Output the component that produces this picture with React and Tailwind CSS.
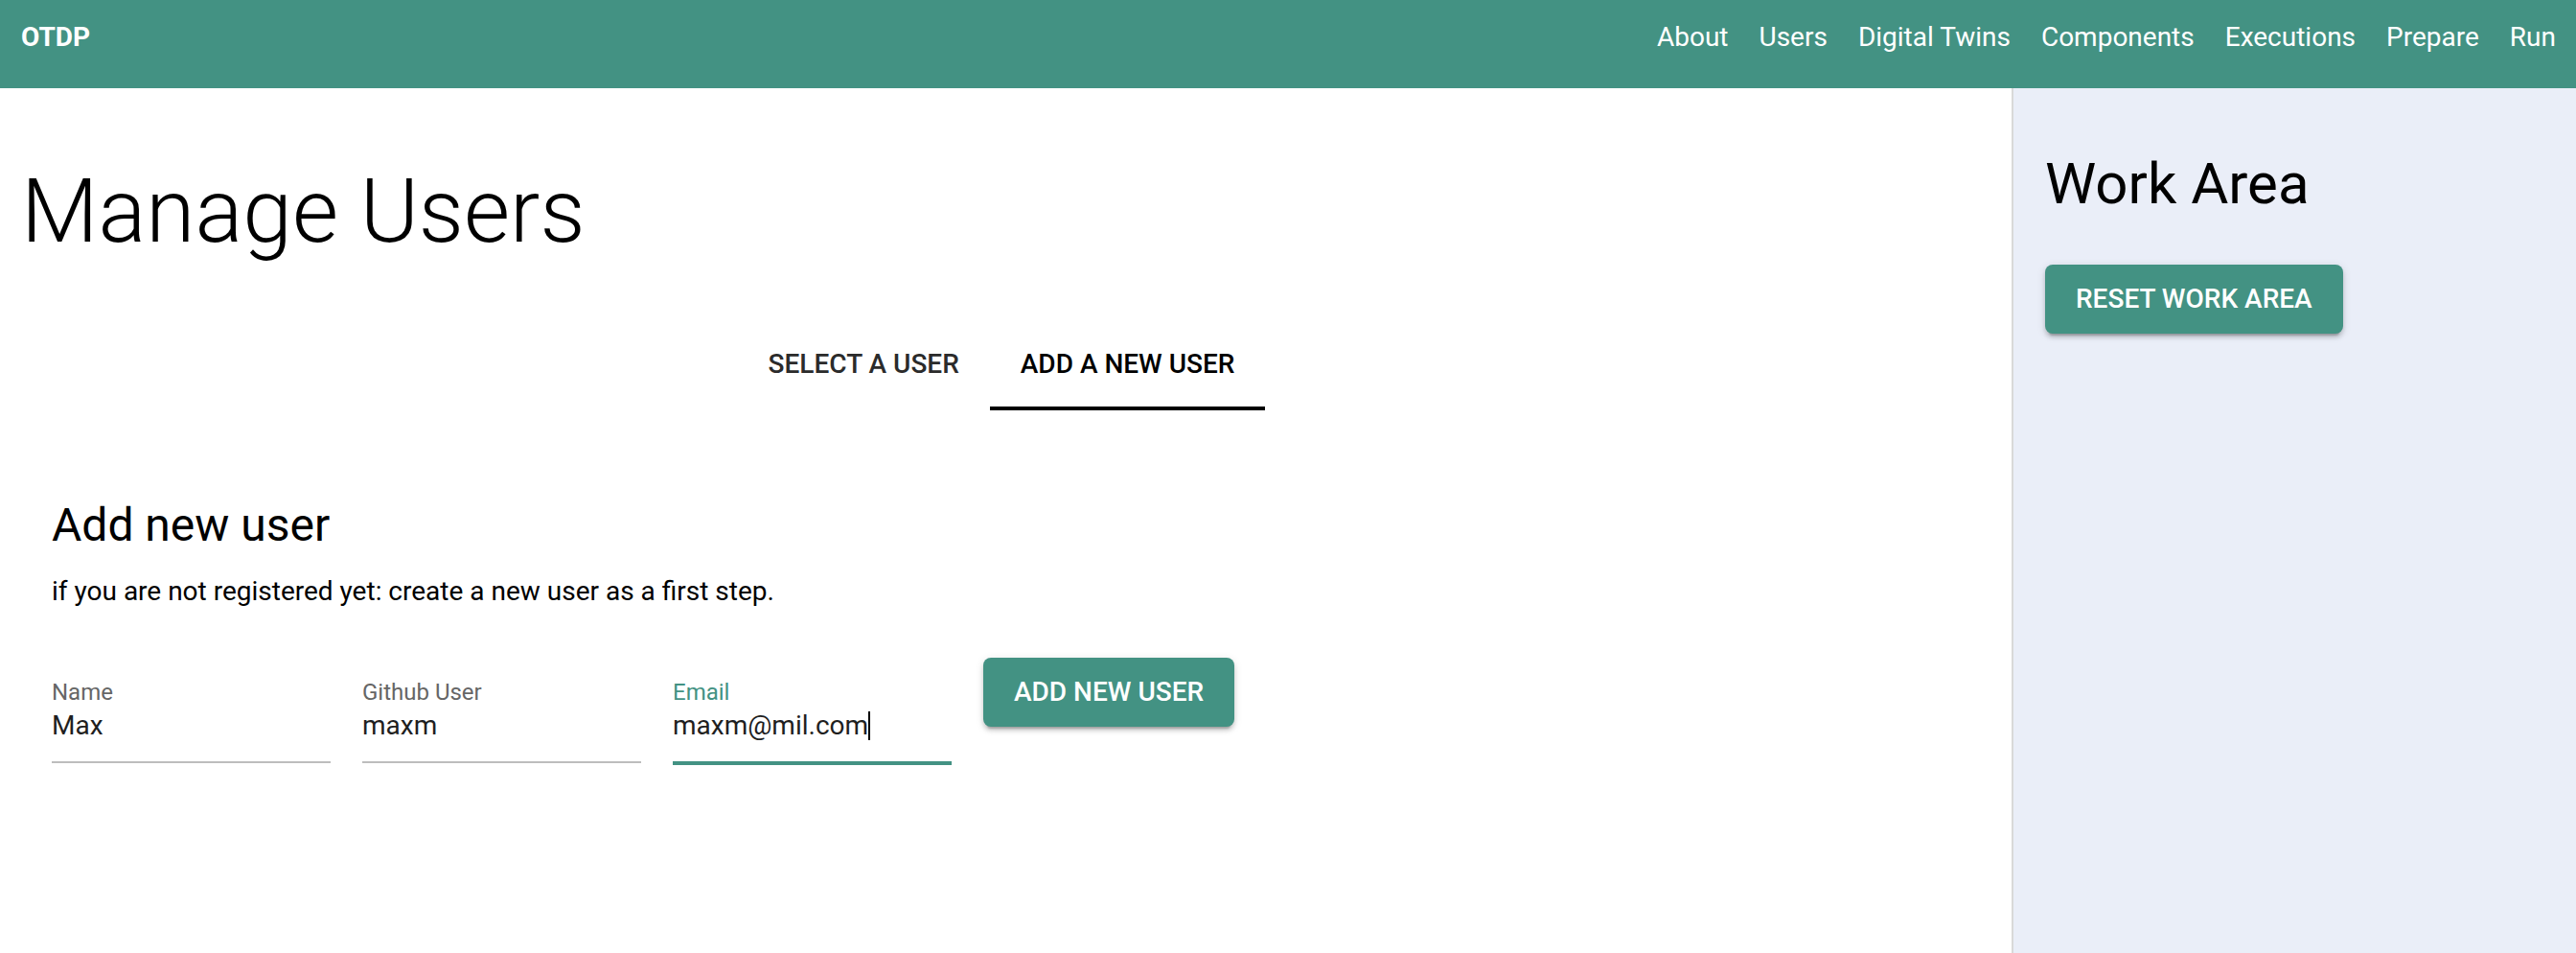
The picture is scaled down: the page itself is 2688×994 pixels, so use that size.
import { useState } from "react";

const navItems = ["About", "Users", "Digital Twins", "Components", "Executions", "Prepare", "Run"];

const Field = ({ label, value, focused }) => (
  <div className="w-[291px] pt-[24px] flex flex-col">
    <div
      className={`text-[24px] leading-[24px] ${focused ? "text-[#439283]" : "text-[#666666]"}`}
    >
      {label}
    </div>
    <div
      className={`mt-[3px] text-[28px] leading-[40px] text-[#1f1f1f] ${
        focused ? "pb-[17px] border-b-4 border-[#439283]" : "pb-[17px] border-b-2 border-[#bdbdbd]"
      }`}
    >
      {value}
      {focused && <span className="inline-block w-[2px] h-[30px] bg-black align-[-6px]" />}
    </div>
  </div>
);

const App = () => {
  const [tab, setTab] = useState(1);

  return (
    <div className="w-[2688px] h-[994px] flex flex-col font-['Roboto',sans-serif] text-black bg-white">
      <header className="h-[92px] bg-[#439283] text-white flex items-start justify-between pl-[22px] pr-[21px] pt-[23px]">
        <div className="text-[28px] leading-[32px] font-bold">OTDP</div>
        <nav className="flex gap-[32px] text-[28px] leading-[32px]">
          {navItems.map((item) => (
            <span key={item}>{item}</span>
          ))}
        </nav>
      </header>

      <div className="flex flex-1">
        <main className="w-[2099px] px-[22px]">
          <h1 className="mt-[73px] text-[93px] leading-[111px] font-light">Manage Users</h1>

          <div className="mt-[68px] flex justify-center pr-[9px]">
            {["Select a user", "Add a new user"].map((label, idx) => (
              <button
                key={label}
                onClick={() => setTab(idx)}
                className={`px-[32px] pt-[16px] pb-[24px] text-[28px] leading-[40px] font-medium uppercase border-b-4 ${
                  tab === idx ? "text-black border-black" : "text-[#2b2b2b] border-transparent"
                }`}
              >
                {label}
              </button>
            ))}
          </div>

          <section className="pl-[32px] mt-[88px]">
            <h2 className="text-[48px] leading-[64px]">Add new user</h2>
            <p className="mt-[17px] text-[28px] leading-[40px]">
              if you are not registered yet: create a new user as a first step.
            </p>
            <div className="mt-[49px] flex items-start gap-[33px]">
              <Field label="Name" value="Max" />
              <Field label="Github User" value="maxm" />
              <Field label="Email" value="maxm@mil.com" focused />
              <button className="bg-[#439283] text-white text-[28px] leading-[48px] font-medium uppercase px-[32px] py-[12px] rounded-[8px] shadow-[0_6px_2px_-4px_rgba(0,0,0,0.2),0_4px_4px_0_rgba(0,0,0,0.14),0_2px_10px_0_rgba(0,0,0,0.12)]">
                Add new user
              </button>
            </div>
          </section>
        </main>

        <aside className="flex-1 bg-[#eaeef8] border-l-2 border-[#d9d9d9] pl-[33px]">
          <h2 className="mt-[64px] text-[60px] leading-[72px]">Work Area</h2>
          <button className="mt-[48px] bg-[#439283] text-white text-[28px] leading-[48px] font-medium uppercase px-[32px] py-[12px] rounded-[8px] shadow-[0_6px_2px_-4px_rgba(0,0,0,0.2),0_4px_4px_0_rgba(0,0,0,0.14),0_2px_10px_0_rgba(0,0,0,0.12)]">
            Reset work area
          </button>
        </aside>
      </div>
    </div>
  );
};

export default App;
